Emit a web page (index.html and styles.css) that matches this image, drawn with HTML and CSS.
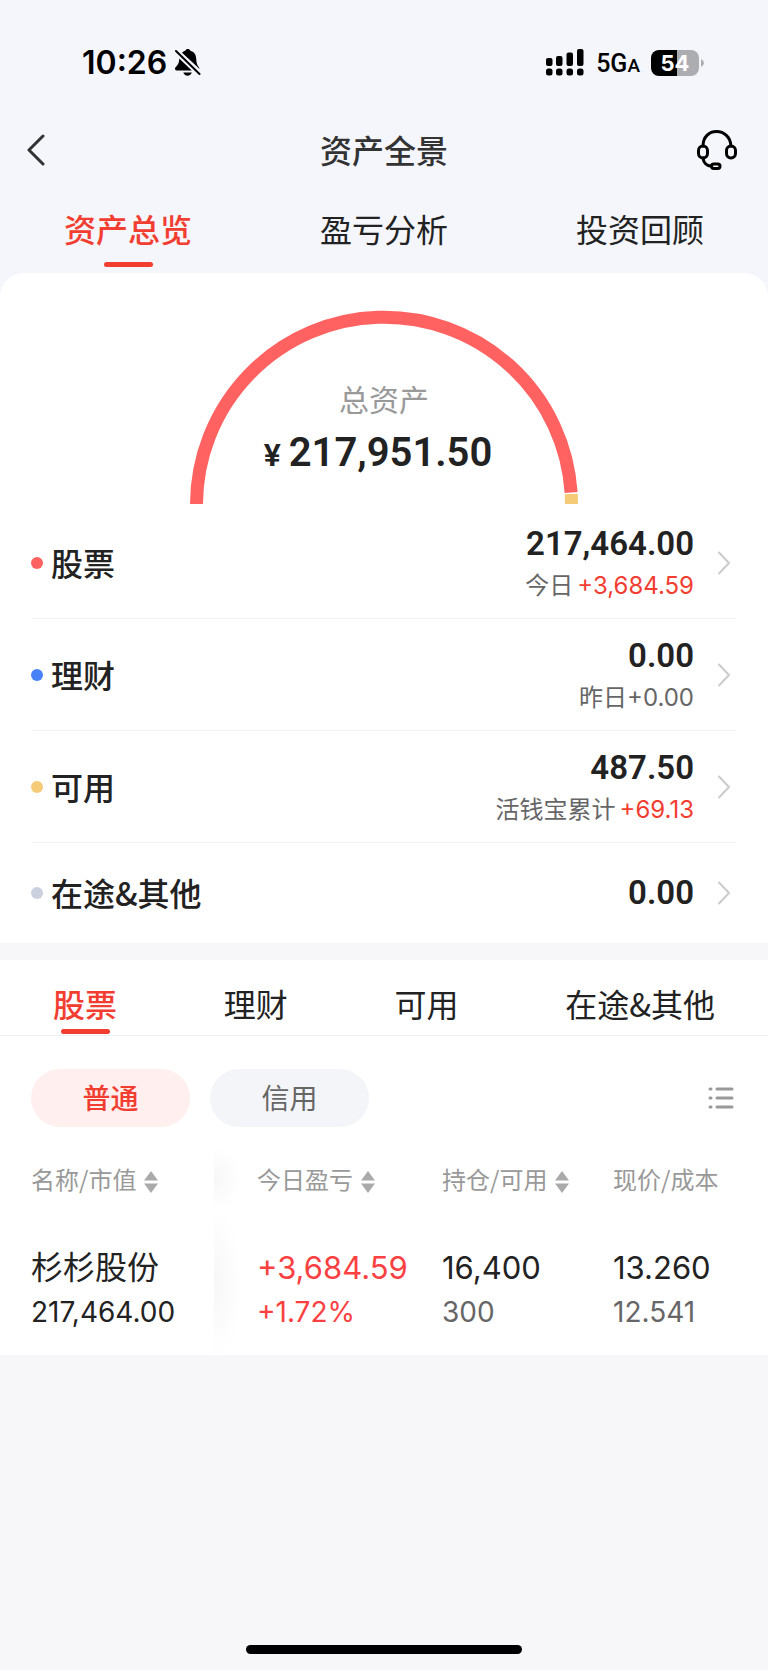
FILE: index.html
```html
<!DOCTYPE html>
<html lang="zh-CN">
<head>
<meta charset="utf-8">
<meta name="viewport" content="width=device-width, initial-scale=1">
<title>资产全景</title>
<link rel="stylesheet" href="styles.css">
</head>
<body>
<div class="app">
  <div class="status">
    <div class="status-left">
      <span class="clock">10:26</span>
      <svg class="bell" width="26" height="28" viewBox="0 0 26 28" aria-hidden="true">
        <path d="M7 3.800C8 2.600 9 2 10.300 1.700C10.700.6 11.600 0 12.800 0s2.100.6 2.500 1.700C19 2.600 21 5.600 21.200 9.500c.1 4.200.8 6.500 2.500 8.500.5.600.9 1.300.9 2z"/>
        <path d="M4.300 9.500L16.800 21.500H2C.8 21.500 0 20.700 0 19.700c0-1 .6-1.500 1.300-2.300C3.400 15.200 4.200 13.500 4.300 9.500z"/>
        <path d="M8.300 23.500h8.500c-.5 2-2.200 3.200-4.200 3.200s-3.800-1.200-4.300-3.200z"/>
        <path class="bell-gap" d="M1 2L24.500 25"/>
        <path class="bell-slash" d="M1 2L24.500 25"/>
      </svg>
    </div>
    <div class="status-right">
      <svg width="38" height="28" viewBox="0 0 38 28" aria-hidden="true">
        <rect x="0" y="9" width="6.500" height="8" rx="2"/><rect x="10" y="7" width="6.500" height="10" rx="2"/><rect x="20.500" y="3.500" width="6.500" height="13.500" rx="2"/><rect x="31" y="0" width="6.500" height="17" rx="2"/>
        <rect x="0" y="19.500" width="6.500" height="7" rx="2.500"/><rect x="10" y="19.500" width="6.500" height="7" rx="2.500"/><rect x="20.500" y="19.500" width="6.500" height="7" rx="2.500"/><rect x="31" y="19.500" width="6.500" height="7" rx="2.500"/>
      </svg>
      <span class="network">5G<span class="network-a">A</span></span>
      <div class="battery"><span class="battery-level">54</span><svg class="battery-cap" width="3" height="8" viewBox="0 0 3 8" aria-hidden="true"><path d="M0 0Q3 1.500 3 4T0 8z"/></svg></div>
    </div>
  </div>

  <header class="nav">
    <button class="icon-button" aria-label="返回"><svg width="18" height="32" viewBox="0 0 18 32"><path d="M16 2L2 16L16 30" class="back-line"/></svg></button>
    <h1 class="title">资产全景</h1>
    <button class="icon-button nav-help" aria-label="客服"><svg class="headset" width="40" height="42" viewBox="0 0 40 42">
      <path d="M6 17C6 8 12 2.500 19.500 2.500S33.500 8 34 17"/>
      <rect x="1.500" y="17" width="9" height="12" rx="4.500"/><rect x="29.500" y="17" width="9" height="12" rx="4.500"/>
      <path d="M6 29c.5 5 4 8 8.500 8.300"/><rect x="14.500" y="35" width="8.500" height="4.500" rx="2.200"/>
    </svg></button>
  </header>

  <nav class="tabs">
    <a class="tab tab-active" href="#overview">资产总览</a>
    <a class="tab" href="#analysis">盈亏分析</a>
    <a class="tab" href="#review">投资回顾</a>
  </nav>

  <main>
    <section class="overview" id="overview">
      <div class="gauge">
        <svg class="gauge-arc" width="388" height="194" viewBox="0 0 388 194" aria-hidden="true">
          <path d="M6.500 194A187.500 187.500 0 0 1 381.100 182.500" stroke="#ff6260"/>
          <path d="M381.200 184A187.500 187.500 0 0 1 381.500 194" stroke="#f6cb78"/>
        </svg>
        <div class="gauge-text">
          <span class="gauge-label">总资产</span>
          <strong class="gauge-value"><span class="yen">¥</span>217,951.50</strong>
        </div>
      </div>
      <ul class="assets">
        <li><a class="asset" href="#stock"><span class="dot dot-red"></span><span class="asset-name">股票</span><span class="asset-figures"><b>217,464.00</b><small>今日<em>+3,684.59</em></small></span><svg class="chevron" width="14" height="24" viewBox="0 0 14 24"><path d="M2 1.500L12 12L2 22.500"/></svg></a></li>
        <li><a class="asset" href="#wealth"><span class="dot dot-blue"></span><span class="asset-name">理财</span><span class="asset-figures"><b>0.00</b><small>昨日+0.00</small></span><svg class="chevron" width="14" height="24" viewBox="0 0 14 24"><path d="M2 1.500L12 12L2 22.500"/></svg></a></li>
        <li><a class="asset" href="#cash"><span class="dot dot-gold"></span><span class="asset-name">可用</span><span class="asset-figures"><b>487.50</b><small>活钱宝累计<em>+69.13</em></small></span><svg class="chevron" width="14" height="24" viewBox="0 0 14 24"><path d="M2 1.500L12 12L2 22.500"/></svg></a></li>
        <li><a class="asset asset-short" href="#other"><span class="dot dot-grey"></span><span class="asset-name">在途&amp;其他</span><span class="asset-figures"><b>0.00</b></span><svg class="chevron" width="14" height="24" viewBox="0 0 14 24"><path d="M2 1.500L12 12L2 22.500"/></svg></a></li>
      </ul>
    </section>

    <section class="holdings">
      <nav class="subtabs">
        <a class="subtab subtab-active" href="#stock">股票</a>
        <a class="subtab" href="#wealth">理财</a>
        <a class="subtab" href="#cash">可用</a>
        <a class="subtab" href="#other">在途&amp;其他</a>
      </nav>
      <div class="filters">
        <button class="pill pill-active">普通</button>
        <button class="pill">信用</button>
        <button class="icon-button list-button" aria-label="列表"><svg class="list-icon" width="26" height="24" viewBox="0 0 26 24"><path d="M2 3h1M9 3h15M2 12h1M9 12h15M2 21h1M9 21h15"/></svg></button>
      </div>
      <table class="table">
        <colgroup><col class="col-name"><col class="col-profit"><col class="col-position"><col></colgroup>
        <thead><tr>
          <th class="pinned">名称/市值<svg class="sort" width="14" height="22" viewBox="0 0 14 22"><path d="M0 9.500L7 0L14 9.500zM0 12.500H14L7 22z"/></svg></th>
          <th>今日盈亏<svg class="sort" width="14" height="22" viewBox="0 0 14 22"><path d="M0 9.500L7 0L14 9.500zM0 12.500H14L7 22z"/></svg></th>
          <th>持仓/可用<svg class="sort" width="14" height="22" viewBox="0 0 14 22"><path d="M0 9.500L7 0L14 9.500zM0 12.500H14L7 22z"/></svg></th>
          <th>现价/成本</th>
        </tr></thead>
        <tbody><tr>
          <td class="pinned"><span class="primary">杉杉股份</span><span class="secondary">217,464.00</span></td>
          <td class="gain"><span class="primary">+3,684.59</span><span class="secondary">+1.72%</span></td>
          <td><span class="primary">16,400</span><span class="secondary muted">300</span></td>
          <td><span class="primary">13.260</span><span class="secondary muted">12.541</span></td>
        </tr></tbody>
      </table>
    </section>
  </main>
  <div class="home-bar"></div>
</div>
</body>
</html>
```

FILE: styles.css
```css
* { box-sizing: border-box; }

body {
  margin: 0;
  background: #f7f7f9;
  color: #222;
  font-family: Inter, "Noto Sans CJK SC", sans-serif;
  font-size: 32px;
}

a { color: inherit; text-decoration: none; }
svg { display: block; flex: none; }

.app {
  display: flex;
  flex-direction: column;
  min-height: 100vh;
  background: linear-gradient(#f4f6fc, #f4f6fc) top / 100% 320px no-repeat;
}

.status {
  display: flex;
  justify-content: space-between;
  align-items: center;
  height: 102px;
  padding: 24px 64px 0 82px;
  color: #000;
}
.status-left, .status-right { display: flex; align-items: center; }
.status-left { gap: 8px; }
.clock { font-weight: 600; line-height: 40px; }
.bell-gap { fill: none; stroke: #f4f6fc; stroke-width: 5; }
.bell-slash { fill: none; stroke: #000; stroke-width: 2; stroke-linecap: round; }
.network {
  margin: 0 11px 0 12px;
  padding-top: 3px;
  font-family: Roboto, sans-serif;
  font-size: 25px;
  font-weight: 500;
  line-height: 32px;
}
.network-a { font-size: 19px; }
.battery { display: flex; align-items: center; gap: 2px; }
.battery-level {
  width: 48px;
  border-radius: 8px;
  background: linear-gradient(90deg, #000 54%, #acadb1 54%);
  color: #fff;
  font-size: 22px;
  font-weight: 700;
  line-height: 26px;
  text-align: center;
}
.battery-cap { fill: #acadb1; }

.nav {
  display: grid;
  grid-template-columns: 1fr auto 1fr;
  align-items: center;
  height: 96px;
  padding: 0 31px 0 27px;
}
.nav-help { justify-self: end; }
.icon-button {
  display: flex;
  padding: 0;
  border: 0;
  background: none;
}
.back-line { fill: none; stroke: #333; stroke-width: 3; stroke-linecap: round; stroke-linejoin: round; }
.headset { fill: none; stroke: #000; stroke-width: 3; stroke-linecap: round; }
.title { margin: 0; padding: 3px 0 0 4px; color: #333; font-size: 32px; font-weight: 500; line-height: 48px; }

.tabs { display: grid; grid-template-columns: repeat(3, 1fr); height: 75px; }
.tab {
  display: flex;
  flex-direction: column;
  align-items: center;
  padding-top: 9px;
  line-height: 48px;
}
.tab-active, .subtab-active { color: #f23d31; font-weight: 500; }
.tab-active::after, .subtab-active::after {
  content: "";
  width: 49px;
  height: 5px;
  border-radius: 3px;
  background: #f23d31;
}
.tab-active::after { margin-top: 7px; }

.overview {
  padding: 37px 31px 0;
  border-radius: 24px 24px 0 0;
  background: #fff;
}
.gauge { display: grid; justify-items: center; }
.gauge-arc, .gauge-text { grid-area: 1 / 1; }
.gauge-arc { fill: none; stroke-width: 13; }
.gauge-text { display: flex; flex-direction: column; align-items: center; padding-top: 67px; }
.gauge-label { color: #999; font-size: 30px; line-height: 46px; }
.gauge-value {
  padding: 2px 12px 0 0;
  font-family: Roboto, sans-serif;
  font-size: 40px;
  font-weight: 600;
  line-height: 56px;
}
.yen { margin-right: 8px; font-size: 32px; }

.assets { margin: 0; padding: 3px 0 0; list-style: none; }
.assets li + li { border-top: 1px solid #f3f3f5; }
.asset { display: flex; align-items: center; height: 111px; padding-right: 6px; }
.asset-short { height: 100px; }
.dot { width: 12px; height: 12px; border-radius: 50%; }
.dot-red { background: #ff6260; }
.dot-blue { background: #4882f8; }
.dot-gold { background: #f6cb78; }
.dot-grey { background: #cbd0df; }
.asset-name { margin: 0 0 2px 8px; font-family: "Noto Sans CJK SC", sans-serif; font-weight: 500; }
.asset-figures { display: flex; flex: 1; flex-direction: column; align-items: flex-end; }
.asset-figures b {
  font-family: Roboto, sans-serif;
  font-size: 33px;
  font-weight: 600;
  line-height: 44px;
}
.asset-figures small { color: #666; font-size: 24px; line-height: 40px; }
.asset:not(.asset-short) .asset-figures { padding-top: 2px; }
.asset-figures em { margin-left: 4px; color: #f23d31; font-style: normal; }
.chevron { margin-left: 23px; fill: none; stroke: #ccc; stroke-width: 2; stroke-linecap: round; stroke-linejoin: round; }

.holdings { margin-top: 17px; background: #fff; }
.subtabs {
  display: flex;
  justify-content: space-between;
  height: 76px;
  padding: 20px 53px 0;
  border-bottom: 1px solid #f0f0f2;
  font-family: "Noto Sans CJK SC", sans-serif;
}
.subtab { display: flex; flex-direction: column; align-items: center; line-height: 46px; }
.subtab-active::after { margin-top: 3px; }

.filters { display: flex; align-items: center; gap: 20px; padding: 33px 34px 0 31px; }
.pill {
  width: 159px;
  height: 58px;
  padding: 0 0 2px;
  border: 0;
  border-radius: 29px;
  background: #f4f5f8;
  color: #666;
  font: inherit;
  font-size: 28px;
}
.pill-active { background: #ffefee; color: #f23d31; font-weight: 500; }
.list-button { margin-left: auto; }
.list-icon { fill: none; stroke: #999; stroke-width: 3; stroke-linecap: round; }

.table {
  width: 100%;
  margin-top: 19px;
  border-collapse: collapse;
  table-layout: fixed;
  text-align: left;
  white-space: nowrap;
}
.col-name { width: 257px; }
.col-profit { width: 185px; }
.col-position { width: 171px; }
.table th, .table td { padding: 0; }
.table th {
  height: 64px;
  color: #999;
  font-family: "Noto Sans CJK SC", sans-serif;
  font-size: 24px;
  font-weight: 400;
}
.table td { padding: 34px 0 23px; }
.table .pinned {
  padding-left: 31px;
  background: radial-gradient(ellipse 28px 50% at 0 50%, #f7f7f7, #fff) 214px 0 / 28px 100% no-repeat;
}
.sort { display: inline-block; margin-left: 8px; fill: #aaa; vertical-align: -4px; }
.primary, .secondary { display: block; }
.primary { font-size: 31px; line-height: 48px; }
.pinned .primary { font-size: 32px; }
.secondary { font-size: 28px; line-height: 40px; }
.gain { color: #fa4142; }
.muted { color: #666; }

.home-bar {
  width: 276px;
  height: 9px;
  margin: auto auto 16px;
  border-radius: 5px;
  background: #000;
}
```
